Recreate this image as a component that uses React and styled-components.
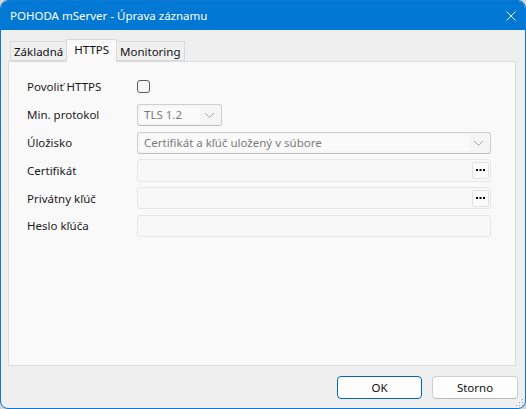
import React from "react";
import styled, { createGlobalStyle } from "styled-components";

const Global = createGlobalStyle`
  html, body {
    margin: 0;
    padding: 0;
    background: #d6d6d6;
  }
  * {
    box-sizing: border-box;
  }
`;

const Window = styled.div`
  width: 526px;
  height: 409px;
  border: 1px solid #0a78d4;
  border-radius: 8px;
  overflow: hidden;
  display: flex;
  flex-direction: column;
  background: #efefef;
  font-family: "Segoe UI", "Noto Sans", sans-serif;
  font-size: 11.5px;
  color: #1b1b1b;
  position: relative;
`;

const TitleBar = styled.div`
  height: 29px;
  flex: 0 0 29px;
  background: #0078d4;
  color: #ffffff;
  display: flex;
  align-items: center;
  justify-content: space-between;
  padding: 0 9px 0 9px;
  font-size: 11.5px;
`;

const CloseIcon = styled.svg`
  width: 10px;
  height: 10px;
`;

const Body = styled.div`
  flex: 1;
  display: flex;
  flex-direction: column;
  padding: 9px 9px 9px 7px;
`;

const Tabs = styled.div`
  display: flex;
  align-items: flex-end;
  height: 22px;
  padding-left: 2px;
  position: relative;
  z-index: 1;
`;

const Tab = styled.div`
  height: ${p => (p.$active ? "23px" : "20px")};
  padding: 0 ${p => (p.$active ? "7px" : "3px")};
  margin-bottom: ${p => (p.$active ? "-1px" : "0")};
  margin-right: -1px;
  border: 1px solid #d9d9d9;
  border-bottom: ${p => (p.$active ? "none" : "1px solid #d9d9d9")};
  background: ${p => (p.$active ? "#f9f9f9" : "#efefef")};
  display: flex;
  align-items: ${p => (p.$active ? "flex-start" : "center")};
  padding-top: ${p => (p.$active ? "2px" : "0")};
  font-size: 11.5px;
  color: #111;
`;

const Panel = styled.div`
  flex: 1;
  background: #f9f9f9;
  border: 1px solid #dcdcdc;
  padding: 12px 24px 0 18px;
`;

const Form = styled.div`
  display: grid;
  grid-template-columns: 110px 1fr;
  grid-template-rows: 24px repeat(5, 22px);
  row-gap: 5.75px;
  align-items: center;
`;

const Label = styled.div`
  font-size: 11.5px;
  color: #1a1a1a;
  white-space: nowrap;
`;

const Checkbox = styled.div`
  width: 13px;
  height: 13px;
  border: 1px solid #5e5e5e;
  border-radius: 3px;
  background: #f6f6f6;
`;

const Combo = styled.div`
  width: ${p => p.$width || "100%"};
  height: 22px;
  border: 1px solid #cfcfcf;
  border-bottom-color: #bdbdbd;
  border-radius: 3px;
  background: #f5f5f5;
  display: flex;
  align-items: center;
  padding: 2px;
`;

const ComboText = styled.div`
  flex: 1;
  height: 100%;
  background: #fafafa;
  color: #7a7a7a;
  display: flex;
  align-items: center;
  padding-left: 4px;
  font-size: 11.5px;
  white-space: nowrap;
`;

const Chevron = styled.svg`
  width: 19px;
  height: 10px;
  flex: 0 0 19px;
`;

const Field = styled.div`
  height: ${p => p.$h || "22px"};
  border: 1px solid #e6e6e6;
  border-radius: 3px;
  background: #f8f8f8;
  display: flex;
  justify-content: flex-end;
  align-items: center;
  padding-right: 1px;
`;

const DotsButton = styled.div`
  width: 17px;
  height: 17px;
  border: 1px solid #e3e3e3;
  border-radius: 2px;
  background: #fafafa;
  display: flex;
  align-items: center;
  justify-content: center;
`;

const Footer = styled.div`
  display: flex;
  justify-content: flex-end;
  gap: 10px;
  padding-top: 10px;
  margin-right: -2px;
`;

const Button = styled.div`
  width: ${p => (p.$primary ? "85px" : "86px")};
  height: 23px;
  border: 1px solid ${p => (p.$primary ? "#0067c0" : "#d0d0d0")};
  border-bottom-color: ${p => (p.$primary ? "#0067c0" : "#bcbcbc")};
  border-radius: 4px;
  background: #fdfdfd;
  display: flex;
  align-items: center;
  justify-content: center;
  font-size: 11.5px;
  color: #111;
`;

const Grip = styled.svg`
  position: absolute;
  right: 1px;
  bottom: 1px;
  width: 8px;
  height: 8px;
`;

function ChevronIcon() {
  return (
    <Chevron viewBox="0 0 19 10">
      <path d="M5 3 L9.5 7.5 L14 3" fill="none" stroke="#a8a8a8" strokeWidth="1" />
    </Chevron>
  );
}

function Dots() {
  return (
    <svg width="9" height="3" viewBox="0 0 9 3">
      <rect x="0" y="0" width="2" height="2" fill="#000" />
      <rect x="3.5" y="0" width="2" height="2" fill="#000" />
      <rect x="7" y="0" width="2" height="2" fill="#000" />
    </svg>
  );
}

export default function App() {
  return (
    <>
      <Global />
      <Window>
        <TitleBar>
          <span>POHODA mServer - Úprava záznamu</span>
          <CloseIcon viewBox="0 0 10 10">
            <path d="M0.5 0.5 L9.5 9.5 M9.5 0.5 L0.5 9.5" stroke="#fff" strokeWidth="1" />
          </CloseIcon>
        </TitleBar>
        <Body>
          <Tabs>
            <Tab>Základná</Tab>
            <Tab $active>HTTPS</Tab>
            <Tab>Monitoring</Tab>
          </Tabs>
          <Panel>
            <Form>
              <Label>Povoliť HTTPS</Label>
              <Checkbox />

              <Label>Min. protokol</Label>
              <Combo $width="85px">
                <ComboText>TLS 1.2</ComboText>
                <ChevronIcon />
              </Combo>

              <Label>Úložisko</Label>
              <Combo>
                <ComboText>Certifikát a kľúč uložený v súbore</ComboText>
                <ChevronIcon />
              </Combo>

              <Label>Certifikát</Label>
              <Field $h="23px">
                <DotsButton><Dots /></DotsButton>
              </Field>

              <Label>Privátny kľúč</Label>
              <Field>
                <DotsButton><Dots /></DotsButton>
              </Field>

              <Label>Heslo kľúča</Label>
              <Field />
            </Form>
          </Panel>
          <Footer>
            <Button $primary>OK</Button>
            <Button>Storno</Button>
          </Footer>
        </Body>
        <Grip viewBox="0 0 8 8">
          <rect x="6" y="0" width="1" height="1" fill="#9a9a9a" />
          <rect x="3" y="3" width="1" height="1" fill="#9a9a9a" />
          <rect x="6" y="3" width="1" height="1" fill="#9a9a9a" />
          <rect x="0" y="6" width="1" height="1" fill="#9a9a9a" />
          <rect x="3" y="6" width="1" height="1" fill="#9a9a9a" />
          <rect x="6" y="6" width="1" height="1" fill="#9a9a9a" />
        </Grip>
      </Window>
    </>
  );
}
